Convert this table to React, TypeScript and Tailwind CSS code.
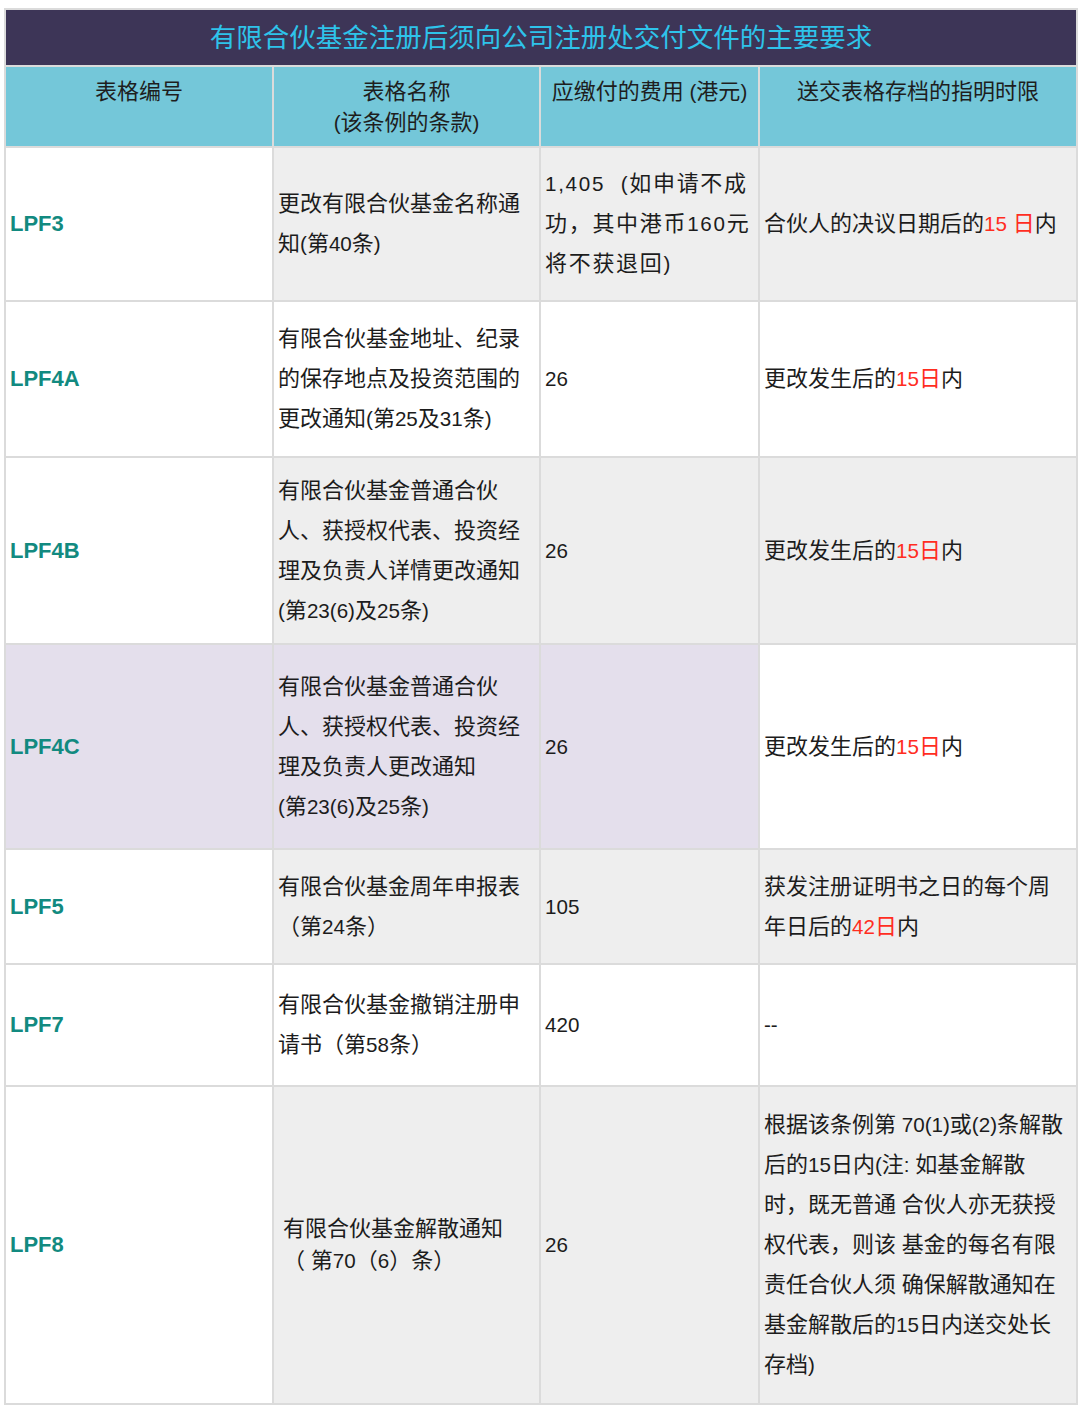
import React from "react";

// Latin runs are set a little smaller than the CJK text, as in the source
const isLatin = (s: string) => /^[\x20-\x7E]+$/.test(s);

const runs = (s: string) =>
  s
    .split(/([\x20-\x7E]+)/)
    .filter(Boolean)
    .map((p, i) =>
      isLatin(p) ? (
        <span key={i} className="text-[20.6px]">
          {p}
        </span>
      ) : (
        <React.Fragment key={i}>{p}</React.Fragment>
      )
    );

// "\n" breaks a line, {...} marks red text
const Rich = ({ text }: { text: string }) => (
  <>
    {text.split("\n").map((line, li) => (
      <React.Fragment key={li}>
        {li > 0 && <br />}
        {line
          .split(/(\{[^}]*\})/)
          .filter(Boolean)
          .map((part, pi) =>
            part.startsWith("{") ? (
              <span key={pi} className="text-[#ff2d1f]">
                {runs(part.slice(1, -1))}
              </span>
            ) : (
              <React.Fragment key={pi}>{runs(part)}</React.Fragment>
            )
          )}
      </React.Fragment>
    ))}
  </>
);

type Bg = { code: string; name: string; fee: string; deadline: string };

type Row = {
  code: string;
  name: string;
  fee: string;
  deadline: string;
  height: string;
  bg: Bg;
  feeClass?: string;
  nameClass?: string;
};

const WHITE = "bg-white";
const GRAY = "bg-[#eeeeee]";
const LILAC = "bg-[#e4dfec]";

const grayRow: Bg = { code: WHITE, name: GRAY, fee: GRAY, deadline: GRAY };
const whiteRow: Bg = { code: WHITE, name: WHITE, fee: WHITE, deadline: WHITE };

const ROWS: Row[] = [
  {
    code: "LPF3",
    height: "h-[154px]",
    bg: grayRow,
    name: "更改有限合伙基金名称通\n知(第40条)",
    fee: "1,405\u00a0\u00a0(如申请不成\n功，其中港币160元\n将不获退回)",
    feeClass: "tracking-[1.7px]",
    deadline: "合伙人的决议日期后的{15 日}内",
  },
  {
    code: "LPF4A",
    height: "h-[156px]",
    bg: whiteRow,
    name: "有限合伙基金地址、纪录\n的保存地点及投资范围的\n更改通知(第25及31条)",
    fee: "26",
    deadline: "更改发生后的{15日}内",
  },
  {
    code: "LPF4B",
    height: "h-[187px]",
    bg: grayRow,
    name: "有限合伙基金普通合伙\n人、获授权代表、投资经\n理及负责人详情更改通知\n(第23(6)及25条)",
    fee: "26",
    deadline: "更改发生后的{15日}内",
  },
  {
    code: "LPF4C",
    height: "h-[205px]",
    bg: { code: LILAC, name: LILAC, fee: LILAC, deadline: WHITE },
    name: "有限合伙基金普通合伙\n人、获授权代表、投资经\n理及负责人更改通知\n(第23(6)及25条)",
    fee: "26",
    deadline: "更改发生后的{15日}内",
  },
  {
    code: "LPF5",
    height: "h-[115px]",
    bg: grayRow,
    name: "有限合伙基金周年申报表\n（第24条）",
    fee: "105",
    deadline: "获发注册证明书之日的每个周\n年日后的{42日}内",
  },
  {
    code: "LPF7",
    height: "h-[122px]",
    bg: whiteRow,
    name: "有限合伙基金撤销注册申\n请书（第58条）",
    fee: "420",
    deadline: "--",
  },
  {
    code: "LPF8",
    height: "h-[318px]",
    bg: grayRow,
    name: "有限合伙基金解散通知\n（ 第70（6）条）",
    nameClass: "pl-[9px]",
    fee: "26",
    deadline:
      "根据该条例第 70(1)或(2)条解散\n后的15日内(注: 如基金解散\n时，既无普通 合伙人亦无获授\n权代表，则该 基金的每名有限\n责任合伙人须 确保解散通知在\n基金解散后的15日内送交处长\n存档)",
  },
];

const HEADERS = ["表格编号", "表格名称\n(该条例的条款)", "应缴付的费用 (港元)", "送交表格存档的指明时限"];

export default function App() {
  const cell =
    "border-2 border-[#dbdbdb] px-[4px] align-middle whitespace-nowrap text-[22px] leading-[40px] text-[#1c1c1c]";

  return (
    <div className="min-h-[1411px] bg-white pt-[8px] pl-[4px] font-['Liberation_Sans','Noto_Sans_CJK_SC',sans-serif]">
      <table className="w-[1072px] table-fixed border-collapse">
        <colgroup>
          <col className="w-[268px]" />
          <col className="w-[267px]" />
          <col className="w-[219px]" />
          <col className="w-[318px]" />
        </colgroup>
        <thead>
          <tr>
            <th
              colSpan={4}
              className="h-[57px] border-2 border-[#dbdbdb] bg-[#3d3557] text-center align-middle font-normal text-[#2ec3ea]"
            >
              <span className="text-[26.5px] leading-[34px]">
                有限合伙基金注册后须向公司注册处交付文件的主要要求
              </span>
            </th>
          </tr>
          <tr>
            {HEADERS.map((h, i) => (
              <th
                key={i}
                className="h-[81px] border-2 border-[#dbdbdb] bg-[#74c7d9] pt-[9px] text-center align-top text-[22px] font-normal leading-[31px] text-[#1e1e1e]"
              >
                <Rich text={h} />
              </th>
            ))}
          </tr>
        </thead>
        <tbody>
          {ROWS.map((r) => (
            <tr key={r.code} className={r.height}>
              <td className={`${cell} ${r.bg.code} text-[21.5px] font-bold text-[#128a80]`}>
                {r.code}
              </td>
              <td className={`${cell} ${r.bg.name} ${r.nameClass ?? ""}`}>
                {r.code === "LPF8" ? (
                  <div className="leading-[32px]">
                    <Rich text={r.name} />
                  </div>
                ) : (
                  <Rich text={r.name} />
                )}
              </td>
              <td className={`${cell} ${r.bg.fee} ${r.feeClass ?? ""}`}>
                <Rich text={r.fee} />
              </td>
              <td className={`${cell} ${r.bg.deadline}`}>
                <Rich text={r.deadline} />
              </td>
            </tr>
          ))}
        </tbody>
      </table>
    </div>
  );
}
